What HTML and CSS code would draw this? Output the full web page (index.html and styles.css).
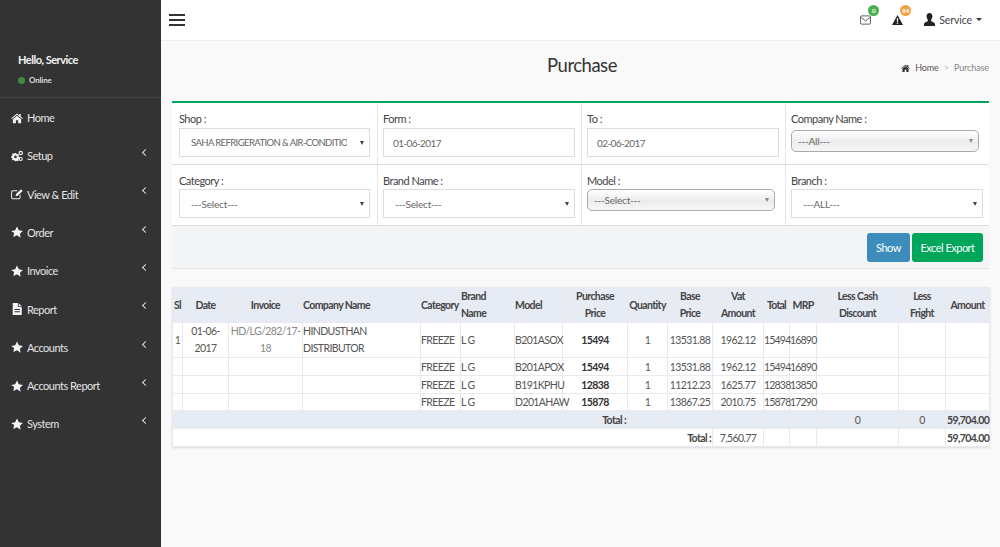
FILE: index.html
```html
<!DOCTYPE html>
<html lang="en">
<head>
    <meta charset="UTF-8">
    <title>Purchase</title>
    <link rel="stylesheet" href="styles.css">
</head>
<body>
    <svg class="icon-defs" width="0" height="0">
        <symbol id="i-home" viewBox="0 0 16 14"><path d="M8 1 .3 7.4l.8 1L8 2.8l6.9 5.6.8-1L13 5.2V1.5h-2v2L8 1Zm0 3L2.5 8.5V14h4v-4h3v4h4V8.5L8 4Z"/></symbol>
        <symbol id="i-cogs" viewBox="0 0 16 14"><path fill-rule="evenodd" d="M5 3h2l.3 1.3 1 .5 1.200-.6 1.200 1.500-.8 1 .3 1.100 1.300.4v2l-1.300.3-.4 1.100.8 1-1.400 1.400-1.100-.7-1 .4L7 14H5l-.3-1.300-1-.4-1.100.7L1.200 11.600l.8-1-.4-1.100L.3 9.200v-2l1.300-.4.4-1.100-.8-1L2.600 3.300l1.100.7 1-.4L5 3Zm1 3.400a1.800 1.800 0 1 0 0 3.600 1.800 1.800 0 0 0 0-3.600Z"/><circle cx="13" cy="3" r="2.200" fill="none" stroke="currentColor" stroke-width="1.600"/><circle cx="13" cy="11" r="2" fill="none" stroke="currentColor" stroke-width="1.500"/></symbol>
        <symbol id="i-edit" viewBox="0 0 16 14"><path d="M2.500 2H9L7.800 3.200H2.500c-.6 0-1 .4-1 1v7.300c0 .6.400 1 1 1h8c.6 0 1-.4 1-1V8.500L12.700 7.300v4.400c0 1.200-1 2.300-2.200 2.300h-8C1.200 14 .2 13 .2 11.700V4.300C.2 3 1.200 2 2.500 2Z"/><path d="M13.400.8 15.500 2.900 9 9.400l-3 .7.800-3 6.600-6.300Z"/></symbol>
        <symbol id="i-star" viewBox="0 0 16 15"><path d="m8 .3 2.400 4.900 5.400.8-3.900 3.800.9 5.400L8 11.700l-4.800 2.500.9-5.400L.2 6l5.400-.8L8 .3Z"/></symbol>
        <symbol id="i-file" viewBox="0 0 12 14"><path fill-rule="evenodd" d="M1 0h6v4.500h4.500V14H1V0Zm7 .3L11.200 3.500H8V.3ZM3 7v1.200h6.500V7H3Zm0 2.500v1.200h6.500V9.500H3Z"/></symbol>
        <symbol id="i-user" viewBox="0 0 12 14"><path d="M6 0c2 0 3.200 1.500 3.200 3.500 0 1.500-.6 3-1.400 3.800v1.200c0 .6 4.200 1.400 4.200 3.500V14H0v-2c0-2.100 4.200-2.900 4.200-3.500V7.300C3.400 6.500 2.800 5 2.800 3.500 2.800 1.500 4 0 6 0Z"/></symbol>
    </svg>

    <div class="wrapper">
        <aside class="sidebar">
            <div class="user-panel">
                <p class="user-name">Hello, Service</p>
                <p class="user-status"><span class="dot"></span>Online</p>
            </div>
            <ul class="menu">
                <li><svg class="menu-icon"><use href="#i-home"/></svg>Home</li>
                <li class="has-sub"><svg class="menu-icon"><use href="#i-cogs"/></svg>Setup</li>
                <li class="has-sub"><svg class="menu-icon"><use href="#i-edit"/></svg>View &amp; Edit</li>
                <li class="has-sub"><svg class="menu-icon"><use href="#i-star"/></svg>Order</li>
                <li class="has-sub"><svg class="menu-icon"><use href="#i-star"/></svg>Invoice</li>
                <li class="has-sub"><svg class="menu-icon"><use href="#i-file"/></svg>Report</li>
                <li class="has-sub"><svg class="menu-icon"><use href="#i-star"/></svg>Accounts</li>
                <li class="has-sub"><svg class="menu-icon"><use href="#i-star"/></svg>Accounts Report</li>
                <li class="has-sub"><svg class="menu-icon"><use href="#i-star"/></svg>System</li>
            </ul>
        </aside>

        <div class="main">
            <header class="topbar">
                <div class="hamburger"><span></span><span></span><span></span></div>
                <div class="top-right">
                    <div class="top-item">
                        <svg class="mail-icon" viewBox="0 0 12 10"><rect x=".5" y=".5" width="11" height="9" rx="1.200" fill="none" stroke="currentColor"/><path d="M.8 2 6 6l5.200-4" fill="none" stroke="currentColor"/></svg>
                        <span class="badge badge-green">0</span>
                    </div>
                    <div class="top-item">
                        <svg class="warn-icon" viewBox="0 0 12 11"><path fill-rule="evenodd" d="M6 0 12 11H0L6 0Zm-.8 3.500.2 4h1.200l.2-4H5.200Zm0 4.800v1.400h1.600V8.300H5.200Z"/></svg>
                        <span class="badge badge-orange">84</span>
                    </div>
                    <div class="top-user">
                        <svg class="user-icon"><use href="#i-user"/></svg>
                        <span>Service</span>
                        <span class="caret"></span>
                    </div>
                </div>
            </header>

            <div class="title-row">
                <h1>Purchase</h1>
                <div class="breadcrumb">
                    <svg class="crumb-icon"><use href="#i-home"/></svg>
                    <span>Home</span>
                    <span class="sep">&gt;</span>
                    <span class="active">Purchase</span>
                </div>
            </div>

            <section class="box">
                <div class="filters">
                    <div class="field">
                        <label>Shop :</label>
                        <div class="select-wrap">
                            <select class="control shop-select"><option>SAHA REFRIGERATION &amp; AIR-CONDITIONING</option></select>
                        </div>
                    </div>
                    <div class="field">
                        <label>Form :</label>
                        <input class="control" type="text" value="01-06-2017">
                    </div>
                    <div class="field">
                        <label>To :</label>
                        <input class="control" type="text" value="02-06-2017">
                    </div>
                    <div class="field">
                        <label>Company Name :</label>
                        <div class="select-wrap soft company">
                            <select class="control"><option>---All---</option></select>
                        </div>
                    </div>
                    <div class="field">
                        <label>Category :</label>
                        <div class="select-wrap">
                            <select class="control"><option>---Select---</option></select>
                        </div>
                    </div>
                    <div class="field">
                        <label>Brand Name :</label>
                        <div class="select-wrap">
                            <select class="control"><option>---Select---</option></select>
                        </div>
                    </div>
                    <div class="field">
                        <label>Model :</label>
                        <div class="select-wrap soft model">
                            <select class="control"><option>---Select---</option></select>
                        </div>
                    </div>
                    <div class="field">
                        <label>Branch :</label>
                        <div class="select-wrap">
                            <select class="control"><option>---ALL---</option></select>
                        </div>
                    </div>
                </div>
                <div class="box-footer">
                    <button class="btn btn-blue">Show</button>
                    <button class="btn btn-green">Excel Export</button>
                </div>
            </section>

            <table class="report">
                <colgroup>
                    <col class="c-sl"><col class="c-date"><col class="c-invoice"><col class="c-company">
                    <col class="c-category"><col class="c-brand"><col class="c-model"><col class="c-price">
                    <col class="c-qty"><col class="c-base"><col class="c-vat"><col class="c-total">
                    <col class="c-mrp"><col class="c-cash"><col class="c-fright"><col class="c-amount">
                </colgroup>
                <thead>
                    <tr>
                        <th>Sl</th><th>Date</th><th>Invoice</th><th class="left">Company Name</th>
                        <th class="left">Category</th><th class="left">Brand Name</th><th class="left">Model</th>
                        <th>Purchase<br>Price</th><th>Quantity</th><th>Base<br>Price</th><th>Vat<br>Amount</th>
                        <th class="tight">Total</th><th class="tight">MRP</th><th>Less Cash<br>Discount</th><th>Less<br>Fright</th><th>Amount</th>
                    </tr>
                </thead>
                <tbody>
                    <tr class="first">
                        <td>1</td><td>01-06-2017</td><td class="muted">HD/LG/282/17-18</td><td class="left">HINDUSTHAN DISTRIBUTOR</td>
                        <td class="left">FREEZE</td><td class="left">L G</td><td class="left">B201ASOX</td><td class="strong">15494</td>
                        <td>1</td><td>13531.88</td><td>1962.12</td><td class="left tight">15494</td><td class="left tight">16890</td><td></td><td></td><td></td>
                    </tr>
                    <tr>
                        <td></td><td></td><td></td><td></td>
                        <td class="left">FREEZE</td><td class="left">L G</td><td class="left">B201APOX</td><td class="strong">15494</td>
                        <td>1</td><td>13531.88</td><td>1962.12</td><td class="left tight">15494</td><td class="left tight">16890</td><td></td><td></td><td></td>
                    </tr>
                    <tr>
                        <td></td><td></td><td></td><td></td>
                        <td class="left">FREEZE</td><td class="left">L G</td><td class="left">B191KPHU</td><td class="strong">12838</td>
                        <td>1</td><td>11212.23</td><td>1625.77</td><td class="left tight">12838</td><td class="left tight">13850</td><td></td><td></td><td></td>
                    </tr>
                    <tr class="short">
                        <td></td><td></td><td></td><td></td>
                        <td class="left">FREEZE</td><td class="left">L G</td><td class="left">D201AHAW</td><td class="strong">15878</td>
                        <td>1</td><td>13867.25</td><td>2010.75</td><td class="left tight">15878</td><td class="left tight">17290</td><td></td><td></td><td></td>
                    </tr>
                </tbody>
                <tfoot>
                    <tr class="sub-total">
                        <td colspan="8" class="right label">Total :</td>
                        <td></td><td></td><td></td><td></td><td></td>
                        <td>0</td><td>0</td><td class="right label">59,704.00</td>
                    </tr>
                    <tr class="grand-total">
                        <td colspan="10" class="right label">Total :</td>
                        <td>7,560.77</td><td></td><td></td><td></td><td></td><td class="right label">59,704.00</td>
                    </tr>
                </tfoot>
            </table>
        </div>
    </div>
</body>
</html>
```

FILE: styles.css
```css
* {
    box-sizing: border-box;
}
html, body {
    margin: 0;
    height: 100%;
    overflow: hidden;
}
body {
    font-family: Lato, "Noto Sans", sans-serif;
    font-size: 11.5px;
    color: #444;
    background-color: #f9f9f9;
}
.icon-defs {
    position: absolute;
}
.wrapper {
    display: flex;
    height: 547px;
}

/* Sidebar */
.sidebar {
    width: 161px;
    flex-shrink: 0;
    background-color: #333;
    color: #eee;
}
.user-panel {
    height: 98px;
    padding: 52px 18px 0;
    border-bottom: 1px solid #444;
}
.user-name {
    margin: 0;
    font-size: 11px;
    font-weight: 700;
    letter-spacing: -0.5px;
    line-height: 16px;
    color: #f2f2f2;
}
.user-status {
    display: flex;
    align-items: center;
    margin: 6px 0 0;
    font-size: 8px;
    font-weight: 700;
    letter-spacing: -0.2px;
    line-height: 12px;
    color: #ddd;
}
.dot {
    width: 7px;
    height: 7px;
    margin-right: 4px;
    border-radius: 50%;
    background-color: #3d8b40;
}
.menu {
    list-style: none;
    margin: 0.4px 0 0;
    padding: 0;
}
.menu li {
    position: relative;
    display: flex;
    align-items: center;
    height: 38.3px;
    padding-left: 11px;
    font-size: 11px;
    letter-spacing: -0.5px;
    color: #e4e4e4;
}
.menu-icon {
    width: 12px;
    height: 12px;
    margin-right: 4px;
    fill: #f4f4f4;
    color: #f4f4f4;
}
.has-sub::after {
    content: "";
    position: absolute;
    top: 13.5px;
    right: 13px;
    width: 4px;
    height: 4px;
    border-left: 1.500px solid #ddd;
    border-bottom: 1.500px solid #ddd;
    transform: rotate(45deg);
}

/* Top bar */
.main {
    flex: 1;
    min-width: 0;
}
.topbar {
    display: flex;
    justify-content: space-between;
    align-items: center;
    height: 41px;
    padding: 0 18px 0 8px;
    background-color: #fff;
    border-bottom: 1px solid #eee;
}
.hamburger span {
    display: block;
    width: 16px;
    height: 2px;
    margin: 3px 0;
    background-color: #333;
}
.top-right {
    display: flex;
    align-items: center;
}
.top-item {
    position: relative;
    display: flex;
    margin-right: 21px;
}
.mail-icon {
    width: 11px;
    height: 10px;
    color: #555;
}
.warn-icon {
    width: 11px;
    height: 10px;
    fill: #222;
}
.badge {
    position: absolute;
    top: -10px;
    left: 8px;
    min-width: 11px;
    height: 11px;
    border-radius: 50%;
    font-size: 6px;
    font-weight: 700;
    line-height: 11px;
    text-align: center;
    color: #fff;
}
.badge-green {
    background-color: #4caf50;
}
.badge-orange {
    background-color: #f0a148;
}
.top-user {
    display: flex;
    align-items: center;
    margin-top: -1px;
    font-size: 10.500px;
    letter-spacing: -0.1px;
    color: #444;
}
.user-icon {
    width: 11px;
    height: 13px;
    margin-right: 4px;
    fill: #222;
}
.caret {
    width: 0;
    height: 0;
    margin-left: 4px;
    border-top: 3px solid #333;
    border-left: 3px solid transparent;
    border-right: 3px solid transparent;
}

/* Title */
.title-row {
    position: relative;
    height: 60px;
    padding: 12px 0 0 3px;
    text-align: center;
}
.title-row h1 {
    margin: 0;
    font-size: 18.500px;
    font-weight: 400;
    letter-spacing: -0.5px;
    line-height: 24px;
    color: #333;
}
.breadcrumb {
    position: absolute;
    top: 21px;
    right: 11px;
    display: flex;
    align-items: center;
    gap: 5px;
    font-size: 9px;
    letter-spacing: -0.1px;
    color: #555;
}
.crumb-icon {
    width: 9px;
    height: 8px;
    fill: #333;
}
.breadcrumb .sep {
    color: #bbb;
}
.breadcrumb .active {
    color: #888;
}

/* Filter box */
.box {
    width: 817px;
    margin-left: 11px;
    border-top: 2px solid #00a65a;
    background-color: #fff;
}
.filters {
    display: grid;
    grid-template-columns: 205px 204px 204px 204px;
    grid-template-rows: 62px 61px;
}
.field {
    padding: 8px 6px 0 5px;
    border-left: 1px solid #e6e6e6;
    border-bottom: 1px solid #ddd;
}
.field:first-child,
.field:nth-child(5) {
    padding: 8px 7px 0;
    border-left: none;
}
.field label {
    display: block;
    margin-bottom: 1px;
    height: 15px;
    font-size: 11px;
    letter-spacing: -0.5px;
    line-height: 15px;
    color: #444;
}
.field:nth-child(-n+4) label {
    margin-bottom: 2px;
}
.control {
    display: block;
    width: 100%;
    height: 29px;
    padding: 0 22px 0 11px;
    border: 1px solid #ddd;
    border-radius: 0;
    background: #fff;
    font-family: inherit;
    font-size: 10px;
    letter-spacing: -0.2px;
    color: #666;
    appearance: none;
    outline: none;
}
.shop-select {
    font-size: 9.500px;
    letter-spacing: -0.6px;
}
input.control {
    padding: 0 9px;
    letter-spacing: -0.6px;
}
.select-wrap {
    position: relative;
}
.select-wrap::after {
    content: "";
    position: absolute;
    top: 13px;
    right: 6px;
    border-top: 4px solid #444;
    border-left: 2.500px solid transparent;
    border-right: 2.500px solid transparent;
}
.soft .control {
    height: 22px;
    padding: 0 18px 0 6px;
    border: 1px solid #aaa;
    border-radius: 5px;
    background: linear-gradient(#fff, #ececec 55%, #f7f7f7);
}
.soft::after {
    top: 9px;
    border-top-color: #888;
}
.company {
    margin: 4px 4px 0 0;
    width: 188px;
}
.model {
    width: 188px;
}
.box-footer {
    display: flex;
    justify-content: flex-end;
    gap: 2px;
    height: 43px;
    padding: 7px 6px 0 0;
    background-color: #f4f5f7;
    border-bottom: 1px solid #e2e4e8;
}
.btn {
    height: 29px;
    padding: 0;
    border: none;
    border-radius: 3px;
    font-family: inherit;
    font-size: 11px;
    letter-spacing: -0.5px;
    color: #fff;
}
.btn-blue {
    width: 43px;
    background-color: #3c8dbc;
}
.btn-green {
    width: 71px;
    background-color: #00a65a;
}

/* Table */
.report {
    width: 817px;
    margin: 18px 0 0 11px;
    border-collapse: collapse;
    table-layout: fixed;
    background-color: #fff;
    box-shadow: 0 1px 2px rgba(0, 0, 0, 0.12);
    font-size: 10.500px;
    letter-spacing: -0.6px;
    color: #555;
}
.c-sl { width: 10px; }
.c-date { width: 46px; }
.c-invoice { width: 74px; }
.c-company { width: 118px; }
.c-category { width: 40px; }
.c-brand { width: 54px; }
.c-model { width: 48px; }
.c-price { width: 65px; }
.c-qty { width: 40px; }
.c-base { width: 45px; }
.c-vat { width: 51px; }
.c-total { width: 26px; }
.c-mrp { width: 27px; }
.c-cash { width: 82px; }
.c-fright { width: 47px; }
.c-amount { width: 44px; }

.report th,
.report td {
    padding: 0 1px;
    border: 1px solid #e8eaee;
    text-align: center;
    white-space: nowrap;
}
.report th {
    height: 35px;
    background-color: #e7ebf4;
    font-weight: 700;
    line-height: 17px;
    color: #444;
    white-space: normal;
}
.report td {
    height: 18px;
    line-height: 16px;
}
.report .first td {
    height: 35px;
    line-height: 17px;
    white-space: normal;
}
.report .short td {
    height: 17px;
}
.report .left {
    padding-left: 0;
    text-align: left;
}
.report .right {
    text-align: right;
}
.report .tight {
    padding: 0;
    letter-spacing: -0.8px;
}
.muted {
    color: #888;
}
.strong {
    font-weight: 700;
    color: #333;
}
.label {
    font-weight: 700;
    color: #444;
}
.sub-total td {
    background-color: #e7ebf4;
}
```
